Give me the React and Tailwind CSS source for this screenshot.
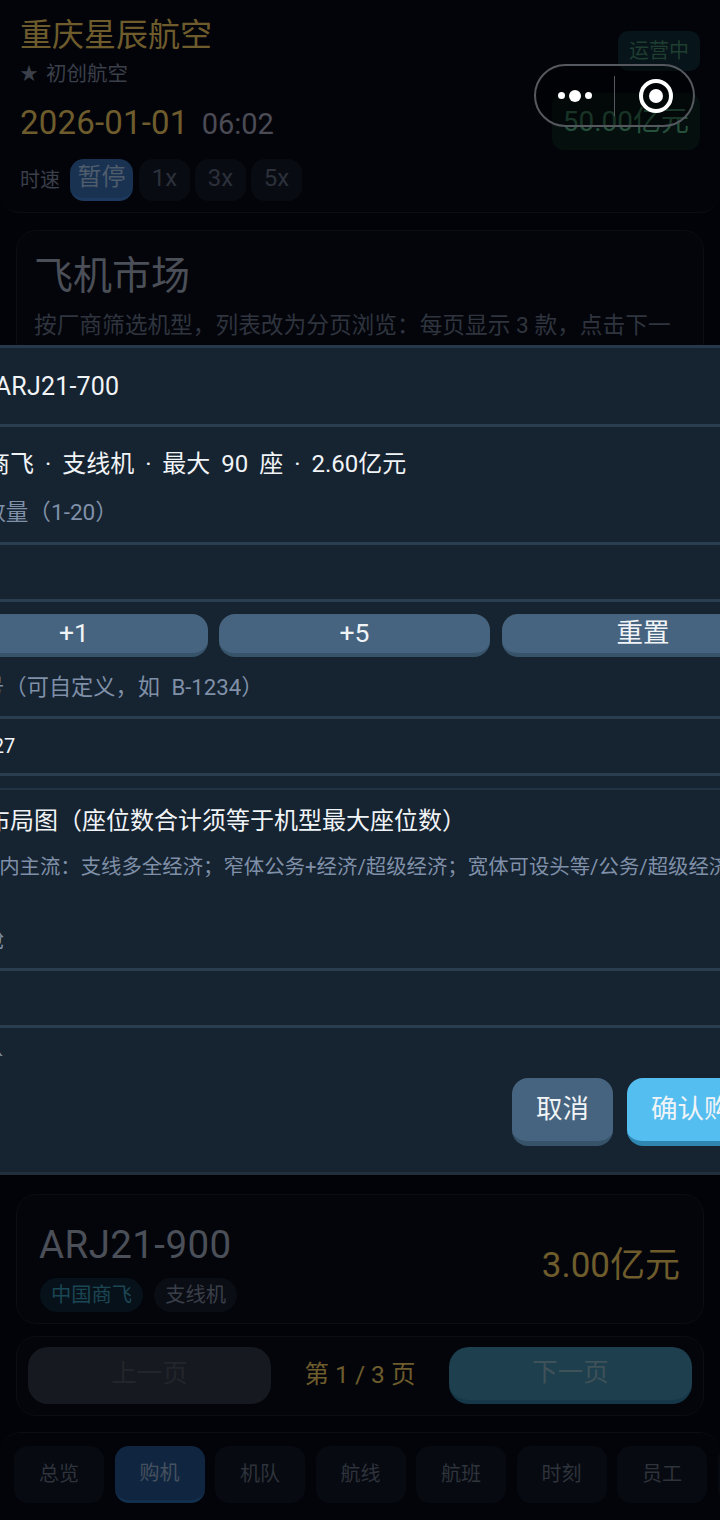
import React from "react";

const font = { fontFamily: 'Roboto, "Noto Sans CJK SC", sans-serif' };

function Chip({ label, active, width }) {
  return (
    <div className={`flex h-[42px] items-center justify-center rounded-[14px] pb-[4px] text-[24px] leading-none ${width} ${active ? "border-b-[3px] border-[#1d3a5e] bg-[#193252] text-[#4f5c6c]" : "bg-[#090b12] text-[#2b303a]"}`}>
      {label}
    </div>
  );
}

function Tab({ label, active }) {
  return (
    <div className={`flex h-[57px] w-[90px] shrink-0 items-center justify-center rounded-[14px] text-[20px] leading-none ${active ? "border-b-[3px] border-[#12304e] bg-[#102640] text-[#46505e]" : "bg-[#070a11] pb-[2px] text-[#2e333c]"}`}>
      {label}
    </div>
  );
}

function Field({ children, className = "" }) {
  return <div className={`border-b-[3px] border-[#2a3e50] ${className}`}>{children}</div>;
}

function SmallButton({ label, className }) {
  return (
    <div className={`flex h-[43px] shrink-0 items-center justify-center rounded-[16px] border-b-[4px] border-[#37536a] bg-[#46647f] text-[26.5px] leading-none text-[#f1f4f7] ${className}`}>
      {label}
    </div>
  );
}

function Modal() {
  return (
    <div className="absolute left-[-62px] top-[345px] h-[830px] w-[860px] border-t-[3px] border-b-[3px] border-t-[#26394a] border-b-[#222f3c] bg-[#162331] text-[#f1f4f7]">
      <div className="flex h-[76px] items-center text-[25px] leading-none tracking-[0.2px]">购买 ARJ21-700</div>
      <div className="border-t-[3px] border-[#2a3e50] pt-[23px]">
        <div className="text-[24px] leading-[28px] [word-spacing:5px]">中国商飞 · 支线机 · 最大 90 座 · 2.60亿元</div>
        <div className="mt-[21px] text-[22.6px] leading-[28px] text-[#7f90a8]">购买数量（1-20）</div>
      </div>
      <Field className="mt-[15px]" />
      <Field className="h-[57px]" />
      <div className="mt-[12px] flex">
        <SmallButton label="+1" className="w-[270px] pl-[2px]" />
        <SmallButton label="+5" className="ml-[11px] w-[271px]" />
        <SmallButton label="重置" className="ml-[12px] w-[282px]" />
      </div>
      <div className="mt-[16px] text-[22.2px] leading-[28px] text-[#7f90a8] [word-spacing:6px]">注册号（可自定义，如 B-1234）</div>
      <Field className="mt-[15px]" />
      <Field className="flex h-[57px] items-center pl-[3px] text-[20px] leading-none">
        <span>B-00127</span>
      </Field>
      <div className="mt-[12px] border-t-[2px] border-[#223444] pt-[17px]">
        <div className="text-[24px] leading-[28px]">客舱布局图（座位数合计须等于机型最大座位数）</div>
        <div className="mt-[18px] whitespace-nowrap text-[20.4px] leading-[28px] text-[#7f90a8]">参考国内主流：支线多全经济；窄体公务+经济/超级经济；宽体可设头等/公务/超级经济</div>
        <div className="mt-[45px] text-[22px] leading-[28px] text-[#7f90a8]">经济舱</div>
      </div>
      <Field className="mt-[14px]" />
      <Field className="h-[57px]" />
      <div className="mt-[18px] h-[10px] overflow-hidden text-[22px] leading-[28px] text-[#7f90a8]">公务舱</div>
      <div className="mt-[22px] flex gap-[14px] pl-[574px]">
        <div className="flex h-[68px] w-[101px] shrink-0 items-center justify-center rounded-[16px] border-b-[5px] border-[#37536a] bg-[#46647f] text-[26.5px] leading-none">取消</div>
        <div className="flex h-[68px] w-[154px] shrink-0 items-center justify-center rounded-[16px] border-b-[5px] border-[#2f86b0] bg-[#55bef0] text-[26.5px] leading-none">确认购买</div>
      </div>
    </div>
  );
}

function Capsule() {
  return (
    <div className="absolute left-[534px] top-[64px] flex h-[63px] w-[161px] items-center rounded-full border-[2px] border-[#55585e] bg-[#000000]/35">
      <div className="flex w-[78px] items-center justify-center gap-[4px]">
        <span className="h-[7px] w-[7px] rounded-full bg-white" />
        <span className="h-[12px] w-[12px] rounded-full bg-white" />
        <span className="h-[7px] w-[7px] rounded-full bg-white" />
      </div>
      <div className="h-[40px] w-px bg-[#55585e]" />
      <div className="flex flex-1 items-center justify-center pl-[3px]">
        <div className="flex h-[34px] w-[34px] items-center justify-center rounded-full border-[4px] border-white">
          <span className="h-[14px] w-[14px] rounded-full bg-white" />
        </div>
      </div>
    </div>
  );
}

export default function App() {
  return (
    <div style={font} className="relative h-[1520px] w-[720px] overflow-hidden bg-[#020308]">
      <div className="relative h-[213px] rounded-b-[20px] border-b border-[#0a0d14] bg-[#03040a] px-[20px] pt-[16px]">
        <div className="text-[32px] leading-[38px] text-[#6e5c2c]">重庆星辰航空</div>
        <div className="mt-[6px] flex items-center gap-[8px] text-[20.5px] leading-[28px] text-[#3a3f49]">
          <span className="text-[18px]">★</span>初创航空
        </div>
        <div className="mt-[15px] flex items-baseline gap-[13px] leading-[40px]">
          <span className="text-[33px] tracking-[0.2px] text-[#6e5c2c]">2026-01-01</span>
          <span className="text-[29px] text-[#4b4b55]">06:02</span>
        </div>
        <div className="mt-[15px] flex items-center text-[20px] text-[#3a3f49]">
          <span className="mr-[10px]">时速</span>
          <Chip label="暂停" active width="w-[63px]" />
          <div className="ml-[6px] flex gap-[5px]">
            <Chip label="1x" width="w-[51px]" />
            <Chip label="3x" width="w-[51px]" />
            <Chip label="5x" width="w-[51px]" />
          </div>
        </div>
        <div className="absolute right-[20px] top-[31px] rounded-[10px] bg-[#07141a] px-[11px] py-[5px] text-[20px] leading-[30px] text-[#1f3e30]">运营中</div>
        <div className="absolute right-[20px] top-[93px] rounded-[12px] bg-[#050f0e] px-[11px] py-[9px] text-[28px] leading-[39px] text-[#26503c]">50.00亿元</div>
      </div>

      <div className="mx-[16px] mt-[17px] h-[130px] rounded-t-[20px] border border-[#0a0d14] bg-[#03050b] px-[17px] pt-[19px]">
        <div className="text-[39px] leading-[52px] text-[#4b4f58]">飞机市场</div>
        <div className="mt-[8px] whitespace-nowrap text-[22.7px] leading-[32px] text-[#2f343e]">按厂商筛选机型，列表改为分页浏览：每页显示 3 款，点击下一</div>
      </div>

      <div className="mx-[16px] mt-[834px] flex h-[130px] justify-between rounded-[20px] border border-[#0a0d14] bg-[#03050b] pl-[22px] pr-[23px] pt-[25px]">
        <div>
          <div className="text-[38.5px] leading-[50px] tracking-[0.4px] text-[#4b4f58]">ARJ21-900</div>
          <div className="ml-[1px] mt-[8px] flex gap-[11px] text-[20.3px] leading-none">
            <span className="flex h-[34px] items-center rounded-full bg-[#07111a] px-[11px] text-[#1b4754]">中国商飞</span>
            <span className="flex h-[34px] items-center rounded-full bg-[#0a0d14] px-[11px] text-[#3a3f49]">支线机</span>
          </div>
        </div>
        <div className="mt-[25px] text-[35px] leading-[42px] text-[#6e5c2c]">3.00亿元</div>
      </div>

      <div className="mx-[16px] mt-[12px] flex h-[80px] items-start justify-between rounded-[20px] border border-[#0a0d14] bg-[#03050b] px-[11px] pt-[10px]">
        <div className="flex h-[57px] w-[243px] items-center justify-center rounded-[20px] bg-[#16191f] pb-[4px] text-[25.5px] leading-none text-[#22262c]">上一页</div>
        <div className="mt-[16px] text-[24.5px] leading-none text-[#6e5c2c]">第 1 / 3 页</div>
        <div className="flex h-[57px] w-[243px] items-center justify-center rounded-[20px] border-b-[4px] border-[#153748] bg-[#1e3f4e] pb-[2px] text-[25.5px] leading-none text-[#3f5159]">下一页</div>
      </div>

      <div className="mt-[16px] flex h-[88px] gap-[10.5px] overflow-hidden rounded-t-[20px] border-t border-[#0a0d14] bg-[#03040a] pl-[14px] pt-[13px]">
        <Tab label="总览" />
        <Tab label="购机" active />
        <Tab label="机队" />
        <Tab label="航线" />
        <Tab label="航班" />
        <Tab label="时刻" />
        <Tab label="员工" />
        <Tab label="" />
      </div>

      <Modal />
      <Capsule />
    </div>
  );
}
